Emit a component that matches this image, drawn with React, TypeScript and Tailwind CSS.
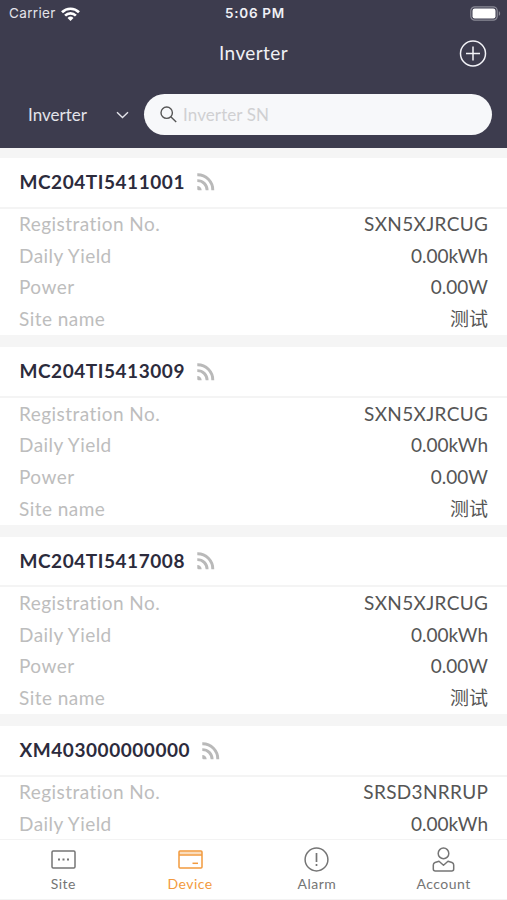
import React from "react";

type Device = {
  sn: string;
  reg: string;
  daily: string;
  power?: string;
  site?: string;
};

const devices: Device[] = [
  { sn: "MC204TI5411001", reg: "SXN5XJRCUG", daily: "0.00kWh", power: "0.00W", site: "测试" },
  { sn: "MC204TI5413009", reg: "SXN5XJRCUG", daily: "0.00kWh", power: "0.00W", site: "测试" },
  { sn: "MC204TI5417008", reg: "SXN5XJRCUG", daily: "0.00kWh", power: "0.00W", site: "测试" },
  { sn: "XM403000000000", reg: "SRSD3NRRUP", daily: "0.00kWh" },
];

const StatusBar = () => (
  <div className="flex h-[27px] items-center justify-between pl-[9px] pr-[6px] font-['Inter',sans-serif] text-[13.5px]">
    <div className="flex flex-1 items-center gap-[5px]">
      <span className="tracking-[0.35px] text-[#e4e4ea]">Carrier</span>
      <svg width="19" height="14" viewBox="0 0 19 14" fill="none" stroke="#fff" strokeWidth="2.7">
        <path d="M1 5.2a12.2 12.2 0 0 1 17 0" />
        <path d="M4.1 8.6a7.8 7.8 0 0 1 10.8 0" />
        <path d="M9.5 14l-3-3a4.3 4.3 0 0 1 6 0z" fill="#fff" stroke="none" />
      </svg>
    </div>
    <span className="font-semibold tracking-[0.7px]">5:06 PM</span>
    <div className="flex flex-1 justify-end">
      <svg width="31" height="15" viewBox="0 0 31 15">
        <rect x="0.8" y="0.8" width="26.4" height="13.4" rx="4" fill="none" stroke="#8b8b97" strokeWidth="1.2" />
        <rect x="2.5" y="2.5" width="23" height="10" rx="2.2" fill="#fff" />
        <path d="M28.8 5.2c1.8.6 1.8 4 0 4.6z" fill="#8b8b97" />
      </svg>
    </div>
  </div>
);

const Header = () => (
  <header className="h-[148px] shrink-0 bg-[#3d3c4e] text-[#f0f0f5]">
    <StatusBar />
    <div className="grid h-[53px] grid-cols-[1fr_auto_1fr] items-center px-[20px]">
      <span />
      <h1 className="text-[19px] tracking-[0.4px]">Inverter</h1>
      <svg className="justify-self-end" width="28" height="28" viewBox="0 0 28 28" fill="none" stroke="#f3f3f8" strokeWidth="1.5">
        <circle cx="14" cy="13.5" r="12.5" />
        <path d="M14 6.5v14M7 13.5h14" />
      </svg>
    </div>
    <div className="flex items-center pl-[28px] pr-[15px] pt-[14px]">
      <div className="flex w-[116px] items-center justify-between pr-[15px]">
        <span className="text-[17px] leading-[26px] text-[#e4e4ea]">Inverter</span>
        <svg width="13" height="8" viewBox="0 0 13 8" fill="none" stroke="#e4e4ea" strokeWidth="1.4">
          <path d="M1 1.2l5.5 5.3L12 1.2" />
        </svg>
      </div>
      <div className="flex h-[41px] flex-1 items-center gap-[6px] rounded-full bg-[#f7f8fa] pl-[16px]">
        <svg width="17" height="17" viewBox="0 0 17 17" fill="none" stroke="#555" strokeWidth="1.4">
          <circle cx="6.7" cy="6.7" r="5.7" />
          <path d="M10.8 10.8l5.4 5.2" />
        </svg>
        <span className="text-[17px] tracking-[0.1px] text-[#d0d0d2]">Inverter SN</span>
      </div>
    </div>
  </header>
);

const Row = ({ label, value, wide }: { label: string; value: string; wide?: boolean }) => (
  <div className="flex h-[31.7px] items-center justify-between">
    <span className="tracking-[0.45px] text-[#bdbdbd]">{label}</span>
    <span className={`text-[#555] ${wide ? "-mr-[0.35px] tracking-[0.35px]" : ""}`}>{value}</span>
  </div>
);

const DeviceCard = ({ device }: { device: Device }) => (
  <section className="shrink-0 bg-white">
    <div className="flex h-[50.5px] items-center gap-[12px] border-b-2 border-[#f4f4f4] px-[19.5px]">
      <h2 className="text-[19px] font-bold tracking-[0.55px] text-[#2c2b3c]">{device.sn}</h2>
      <svg width="18" height="18" viewBox="0 0 18 18" fill="none" stroke="#b9b9b9" strokeWidth="2.9">
        <path d="M0.3 1.7a15.2 15.2 0 0 1 15.5 15.6" />
        <path d="M0.3 7.6a9.6 9.6 0 0 1 9.8 9.7" />
        <path d="M0.3 12.9a4.4 4.4 0 0 1 4.4 4.4h-3.2a1.2 1.2 0 0 1-1.2-1.2z" fill="#b9b9b9" stroke="none" />
      </svg>
    </div>
    <div className="px-[19px] text-[19px]">
      <Row label="Registration No." value={device.reg} wide />
      <Row label="Daily Yield" value={device.daily} />
      {device.power && <Row label="Power" value={device.power} />}
      {device.site && <Row label="Site name" value={device.site} />}
    </div>
  </section>
);

const tabs = [
  {
    name: "Site",
    icon: (
      <>
        <rect x="2" y="5" width="23" height="17" rx="1.2" />
        <path d="M8 13.5h2M12.5 13.5h2M17 13.5h2" strokeWidth="2" />
      </>
    ),
  },
  {
    name: "Device",
    icon: (
      <>
        <rect x="2" y="5" width="23" height="17" rx="1" />
        <path d="M2 9h23" />
        <path d="M2 7h23" strokeWidth="3" opacity="0.35" />
        <path d="M15.5 17.3h5.5" />
      </>
    ),
  },
  {
    name: "Alarm",
    icon: (
      <>
        <circle cx="13.5" cy="13.5" r="11.4" />
        <path d="M13.5 7v9M13.5 18v2" strokeWidth="1.7" />
      </>
    ),
  },
  {
    name: "Account",
    icon: (
      <>
        <circle cx="13.5" cy="7.4" r="5.3" />
        <path d="M9 15.3l4.5 4 4.5-4 4 1.2q1.7.6 1.7 2.5v4q0 2-2 2H5.3q-2 0-2-2v-4q0-1.9 1.7-2.5z" strokeLinejoin="round" />
      </>
    ),
  },
];

const TabBar = () => (
  <nav className="grid h-[61px] shrink-0 grid-cols-4 border-y border-[#f3f3f3] bg-white">
    {tabs.map((tab) => (
      <div
        key={tab.name}
        className={`flex flex-col items-center pt-[6px] ${tab.name === "Device" ? "text-[#f29a3e]" : "text-[#757575]"}`}
      >
        <svg width="27" height="27" viewBox="0 0 27 27" fill="none" stroke="currentColor" strokeWidth="1.5">
          {tab.icon}
        </svg>
        <span className="text-[14px] leading-[22px] tracking-[0.45px]">{tab.name}</span>
      </div>
    ))}
  </nav>
);

const App = () => {
  return (
    <div className="flex h-[900px] w-[507px] flex-col overflow-hidden bg-white font-['Lato','Noto_Sans_CJK_SC',sans-serif]">
      <Header />
      <main className="flex min-h-0 flex-1 flex-col gap-[12.2px] overflow-hidden bg-[#f5f5f5] pt-[10px]">
        {devices.map((device) => (
          <DeviceCard key={device.sn} device={device} />
        ))}
      </main>
      <TabBar />
    </div>
  );
};

export default App;
